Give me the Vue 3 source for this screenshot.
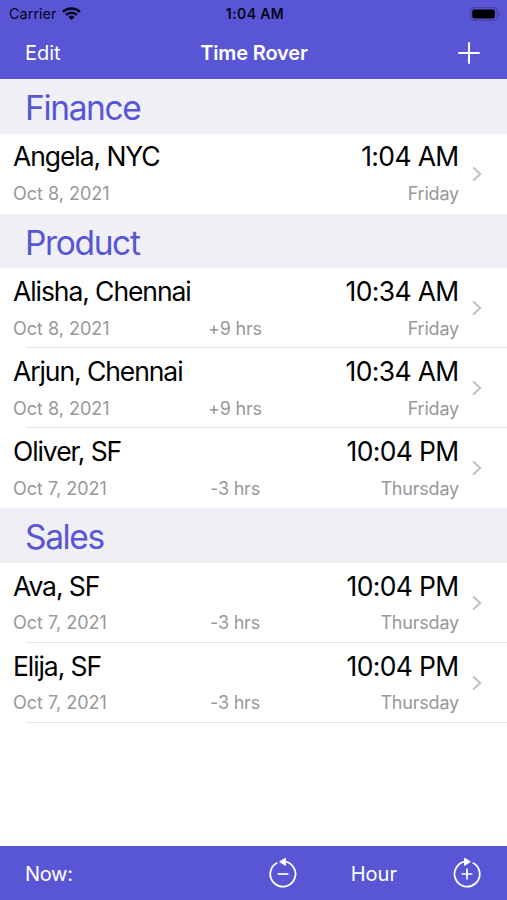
<template>
  <div class="screen">
    <header>
      <div class="status">
        <div class="carrier">
          <span>Carrier</span>
          <svg width="19" height="14" viewBox="0 0 19 14">
            <g fill="none" stroke="#06061a" stroke-width="2.5">
              <path d="M1 4.8a12.3 12.3 0 0 1 17 0" />
              <path d="M4 7.9a8 8 0 0 1 11 0" />
            </g>
            <path d="M6.4 9.9a4.6 4.6 0 0 1 6.2 0L9.5 13.1z" fill="#06061a" />
          </svg>
        </div>
        <span class="clock">1:04 AM</span>
        <svg class="battery" width="31" height="14" viewBox="0 0 31 14">
          <rect x="0.7" y="0.7" width="26.6" height="12.6" rx="3.6" fill="none" stroke="#4743a8" stroke-width="1.3" />
          <rect x="2.3" y="2.4" width="22.6" height="9.2" rx="2" fill="#000" />
          <path d="M28.6 5v4q1.6-.6 1.6-2t-1.6-2z" fill="#4743a8" />
        </svg>
      </div>
      <div class="nav">
        <span class="edit">Edit</span>
        <h1>Time Rover</h1>
        <svg class="add" width="22" height="22" viewBox="0 0 22 22">
          <path d="M11 .3v21.4M.3 11h21.4" stroke="#fff" stroke-width="1.9" />
        </svg>
      </div>
    </header>

    <main>
      <section v-for="group in groups" :key="group.name">
        <h2>{{ group.name }}</h2>
        <div v-for="person in group.people" :key="person.name" class="row">
          <div class="info">
            <div class="top">
              <span class="name">{{ person.name }}</span>
              <span class="time">{{ person.time }}</span>
            </div>
            <div class="bottom">
              <span>{{ person.date }}</span>
              <span class="offset">{{ person.offset }}</span>
              <span class="day">{{ person.day }}</span>
            </div>
          </div>
          <svg class="chevron" width="10" height="16" viewBox="0 0 10 16">
            <path d="M1.2 1.4 8.2 8l-7 6.6" fill="none" stroke="#c2c2c5" stroke-width="2.1" />
          </svg>
        </div>
      </section>
    </main>

    <footer>
      <span class="now">Now:</span>
      <svg class="back" width="30" height="32" viewBox="0 0 30 32">
        <path d="M9.3 5.7A12.6 12.6 0 1 0 15 4.4" fill="none" stroke="#fff" stroke-width="1.8" />
        <path d="M17.4 1.2v7.2L11.6 4.7z" fill="#fff" stroke="#fff" stroke-width="1" stroke-linejoin="round" />
        <path d="M9.6 17h10.8" stroke="#fff" stroke-width="1.7" />
      </svg>
      <span class="unit">Hour</span>
      <svg class="forward" width="30" height="32" viewBox="0 0 30 32">
        <path d="M20.7 5.7A12.6 12.6 0 1 1 15 4.4" fill="none" stroke="#fff" stroke-width="1.8" />
        <path d="M12.6 1.2v7.2l5.8-3.7z" fill="#fff" stroke="#fff" stroke-width="1" stroke-linejoin="round" />
        <path d="M9.6 17h10.8M15 11.6v10.8" stroke="#fff" stroke-width="1.7" />
      </svg>
    </footer>
  </div>
</template>

<script setup>
const friday = { date: "Oct 8, 2021", day: "Friday" }
const thursday = { date: "Oct 7, 2021", day: "Thursday" }
const chennai = { ...friday, time: "10:34 AM", offset: "+9 hrs" }
const sf = { ...thursday, time: "10:04 PM", offset: "-3 hrs" }

const groups = [
  {
    name: "Finance",
    people: [{ name: "Angela, NYC", time: "1:04 AM", offset: "", ...friday }]
  },
  {
    name: "Product",
    people: [
      { name: "Alisha, Chennai", ...chennai },
      { name: "Arjun, Chennai", ...chennai },
      { name: "Oliver, SF", ...sf }
    ]
  },
  {
    name: "Sales",
    people: [
      { name: "Ava, SF", ...sf },
      { name: "Elija, SF", ...sf }
    ]
  }
]
</script>

<style>
body {
  margin: 0;
}
</style>

<style scoped>
.screen {
  display: flex;
  flex-direction: column;
  height: 900px;
  overflow: hidden;
  background: #fff;
  font-family: Inter, "Liberation Sans", sans-serif;
}
header {
  height: 79px;
  background: #5856d5;
}
.status {
  display: grid;
  grid-template-columns: 1fr auto 1fr;
  align-items: center;
  height: 27px;
  padding: 0 6px 0 9px;
  color: #06061a;
  font-size: 14.5px;
}
.carrier {
  display: flex;
  align-items: center;
  gap: 5px;
}
.clock {
  font-weight: 600;
  font-size: 14px;
  letter-spacing: 0.4px;
}
.battery {
  justify-self: end;
}
.nav {
  display: grid;
  grid-template-columns: 1fr auto 1fr;
  align-items: center;
  height: 51px;
  padding: 0 27px 0 25px;
  color: #fff;
  font-size: 20px;
}
h1 {
  margin: 0;
  padding-left: 3px;
  font-size: 20px;
  font-weight: 600;
  letter-spacing: -0.15px;
}
.add {
  justify-self: end;
}
h2 {
  box-sizing: border-box;
  height: 54.7px;
  margin: 0;
  padding: 2px 0 0 25px;
  background: #f0eff5;
  color: #5856d5;
  font-size: 33.5px;
  font-weight: 400;
  letter-spacing: -1.35px;
  line-height: 54px;
}
.row {
  position: relative;
  display: flex;
  align-items: center;
  box-sizing: border-box;
  height: 80px;
  padding: 0 25px 0 13px;
}
/* inset separator, hidden before the next group title */
.row:not(:last-child)::after,
section:last-child .row::after {
  content: "";
  position: absolute;
  right: 0;
  bottom: 0;
  left: 26px;
  height: 1px;
  background: #e4e4e6;
}
.info {
  flex: 1;
}
.top {
  display: flex;
  justify-content: space-between;
  color: #000;
  font-size: 26.5px;
  line-height: 31px;
}
.name {
  letter-spacing: -1.08px;
}
.time {
  margin-right: 0.4px;
  letter-spacing: -0.65px;
}
.bottom {
  display: grid;
  grid-template-columns: 1fr auto 1fr;
  margin-top: 8.4px;
  color: #98989a;
  font-size: 18px;
  line-height: 25px;
}
.offset {
  padding-right: 2px;
  letter-spacing: -0.2px;
}
.day {
  text-align: right;
  letter-spacing: -0.2px;
}
.chevron {
  margin-left: 13px;
}
footer {
  display: flex;
  align-items: center;
  box-sizing: border-box;
  height: 54px;
  margin-top: auto;
  padding: 0 24.7px 0 25px;
  background: #5856d5;
  color: #fff;
  font-size: 20px;
}
.now {
  flex: 1;
  padding-top: 1px;
  letter-spacing: -0.3px;
}
.unit {
  box-sizing: border-box;
  width: 154px;
  padding: 1px 3px 0 0;
  text-align: center;
}
</style>
